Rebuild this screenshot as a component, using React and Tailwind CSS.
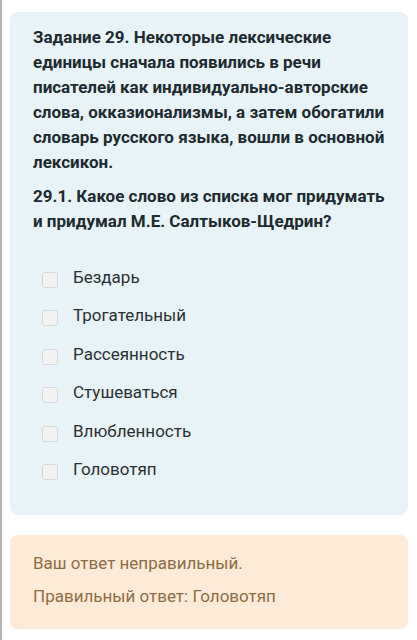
const OPTIONS = [
  'Бездарь',
  'Трогательный',
  'Рассеянность',
  'Стушеваться',
  'Влюбленность',
  'Головотяп',
]

export default function App() {
  return (
    <div
      className="min-h-[640px] border-l-2 border-[#b3b3b3] bg-white pl-2 pr-[9px] pt-3"
      style={{ fontFamily: 'Roboto, "Noto Sans", sans-serif' }}
    >
      <section className="rounded-lg bg-[#e7f3f6] px-[23px] pb-[26px] pt-[13px]">
        <p className="text-[17px] font-bold leading-[25px] text-[#1d2a30]">
          Задание 29. Некоторые лексические единицы сначала появились в речи писателей как
          индивидуально-авторские слова, окказионализмы, а затем обогатили словарь русского
          языка, вошли в основной лексикон.
        </p>
        <p className="mt-[9px] text-[17px] font-bold leading-[25px] text-[#1d2a30]">
          29.1. Какое слово из списка мог придумать и придумал М.Е. Салтыков-Щедрин?
        </p>
        <ul className="mt-6 flex flex-col">
          {OPTIONS.map((o) => (
            <li key={o} className="flex h-[38.5px] items-center gap-[15px] pl-[9px]">
              <span className="mt-[5px] h-4 w-4 shrink-0 rounded-[3px] border border-[#d6d8d9] bg-[#f1f2f2]" />
              <span className="text-[17px] leading-[25px] text-[#2b3033]">{o}</span>
            </li>
          ))}
        </ul>
      </section>
      <section className="mt-5 rounded-lg bg-[#fdebd7] px-[23px] pb-5 pt-4 text-[17px] leading-[25px] text-[#8d6c44]">
        <p>Ваш ответ неправильный.</p>
        <p className="mt-2">Правильный ответ: Головотяп</p>
      </section>
    </div>
  )
}
